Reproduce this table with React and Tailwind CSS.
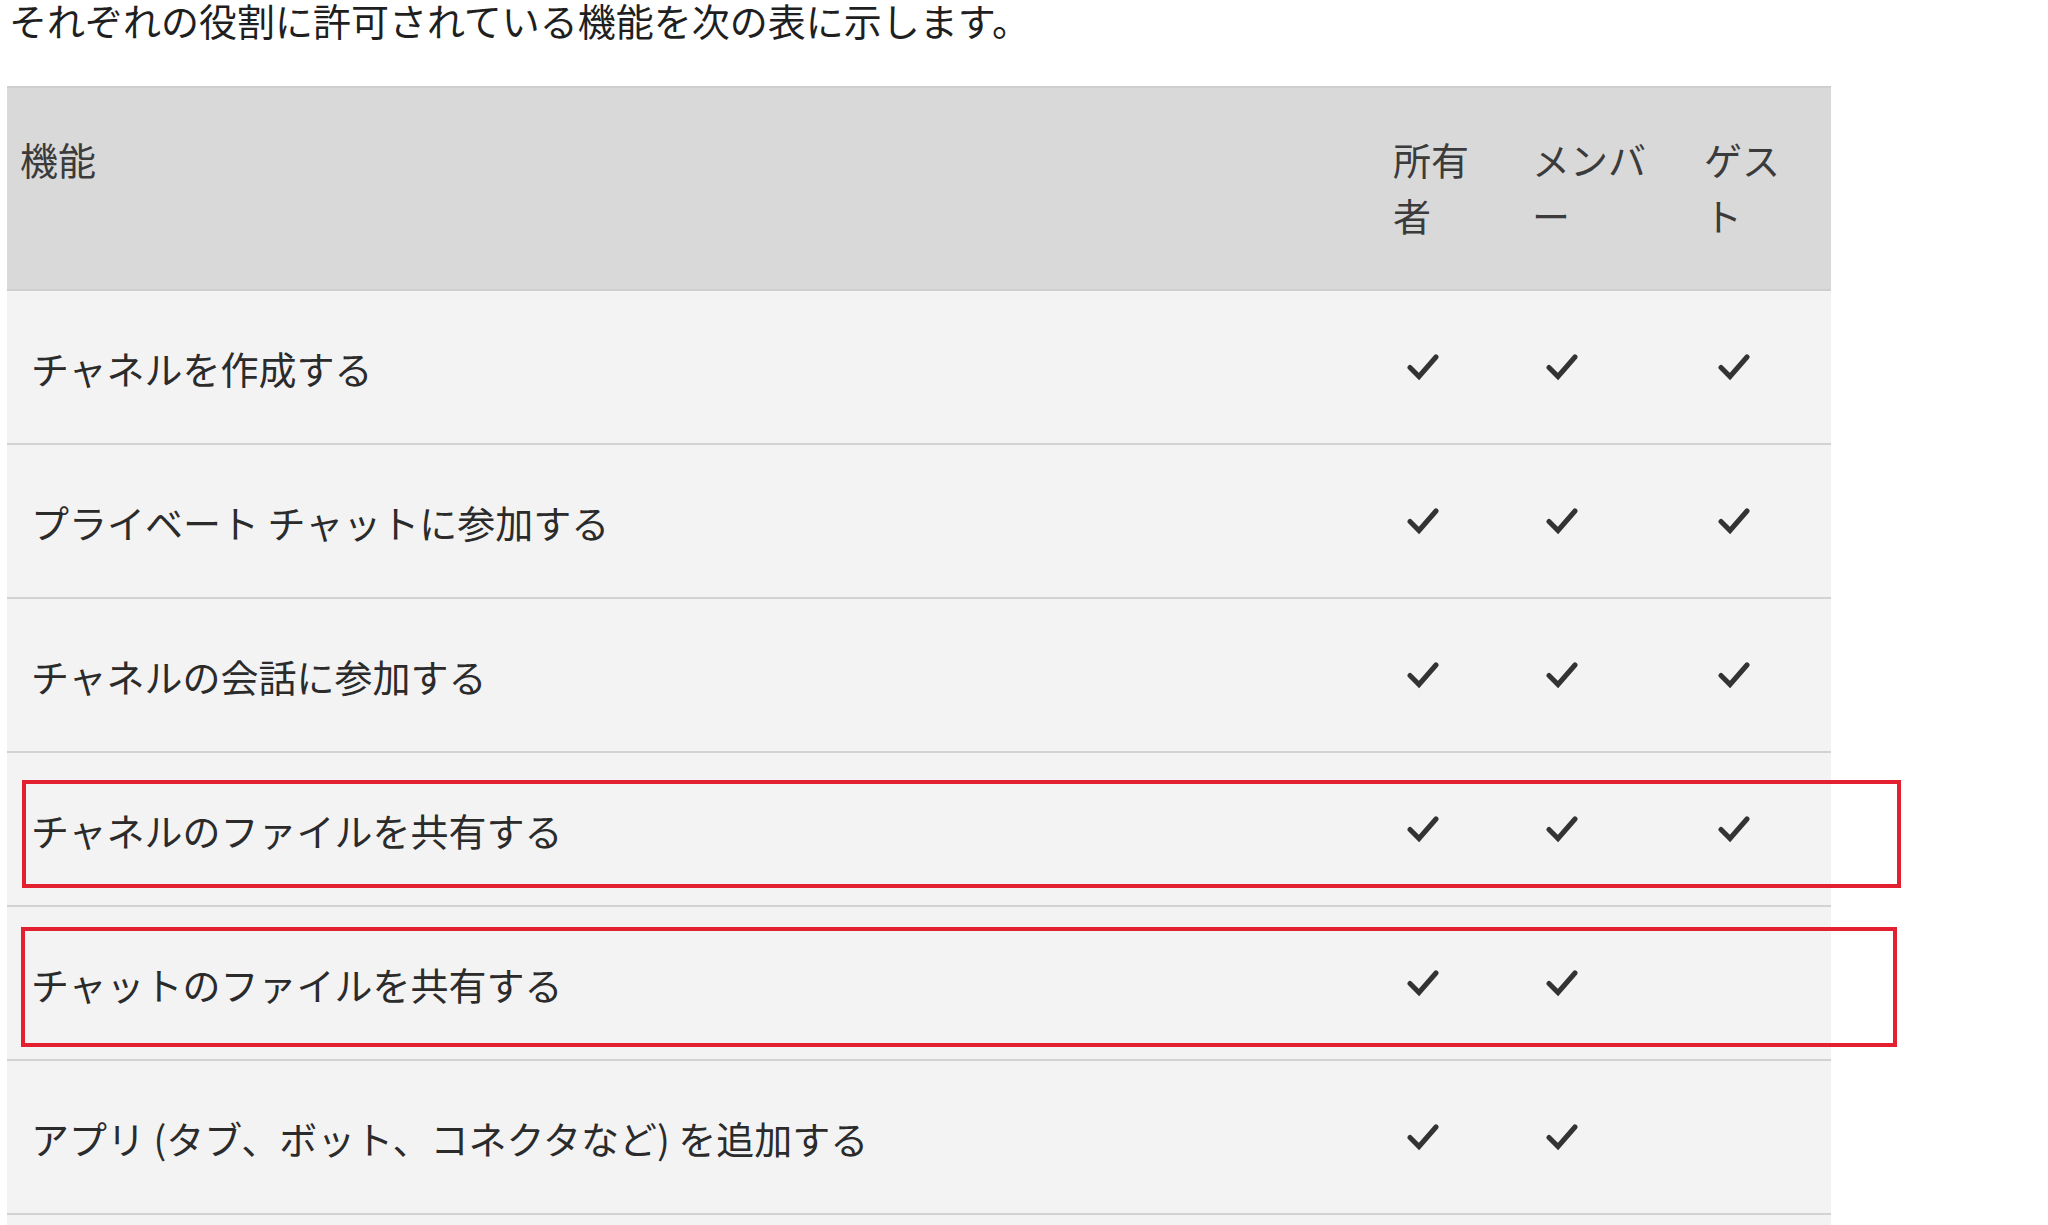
import React from 'react';

const CJK = { fontFamily: '"Noto Sans CJK JP", "Noto Sans", sans-serif' };

const rows = [
  { label: 'チャネルを作成する', owner: true, member: true, guest: true },
  { label: 'プライベート チャットに参加する', owner: true, member: true, guest: true },
  { label: 'チャネルの会話に参加する', owner: true, member: true, guest: true },
  { label: 'チャネルのファイルを共有する', owner: true, member: true, guest: true },
  { label: 'チャットのファイルを共有する', owner: true, member: true, guest: false },
  { label: 'アプリ (タブ、ボット、コネクタなど) を追加する', owner: true, member: true, guest: false },
];

function Check() {
  return (
    <svg width="32" height="28" viewBox="0 0 32 28" className="text-[#333333]">
      <path d="M3 14.5 L12 23.5 L29 4" fill="none" stroke="currentColor" strokeWidth="5" strokeLinecap="round" strokeLinejoin="miter" />
    </svg>
  );
}

const cols = 'grid grid-cols-[1372px_139px_172px_141px]';

export default function App() {
  return (
    <div className="relative h-[1225px] overflow-hidden bg-white px-[7px]" style={CJK}>
      <p className="pl-[2px] text-[38px] leading-[40px] text-[#1f1f1f]">
        それぞれの役割に許可されている機能を次の表に示します。
      </p>

      <div className="mt-[46px] w-[1824px]">
        <div className={`${cols} h-[205px] border-y-2 border-[#cfcfcf] bg-[#d9d9d9] text-[38px] leading-[56px] text-[#3b3b3b]`}>
          <div className="pl-[13px] pt-[43px]">機能</div>
          <div className="pl-[14px] pt-[43px]">所有<br />者</div>
          <div className="pl-[14px] pt-[43px]">メンバ<br />ー</div>
          <div className="pl-[14px] pt-[43px]">ゲス<br />ト</div>
        </div>
        {rows.map((r) => (
          <div key={r.label} className={`${cols} h-[154px] items-center border-b-2 border-[#d2d2d2] bg-[#f3f3f3] text-[38px] text-[#2b2b2b]`}>
            <div className="pl-[24px]">{r.label}</div>
            <div className="pl-[28px]">{r.owner && <Check />}</div>
            <div className="pl-[28px]">{r.member && <Check />}</div>
            <div className="pl-[28px]">{r.guest && <Check />}</div>
          </div>
        ))}
        <div className="h-[154px] bg-[#f3f3f3]" />
      </div>

      <div className="pointer-events-none absolute left-[22px] top-[780px] h-[108px] w-[1879px] border-4 border-[#e3202f]" />
      <div className="pointer-events-none absolute left-[21px] top-[927px] h-[120px] w-[1876px] border-4 border-[#e3202f]" />
    </div>
  );
}
